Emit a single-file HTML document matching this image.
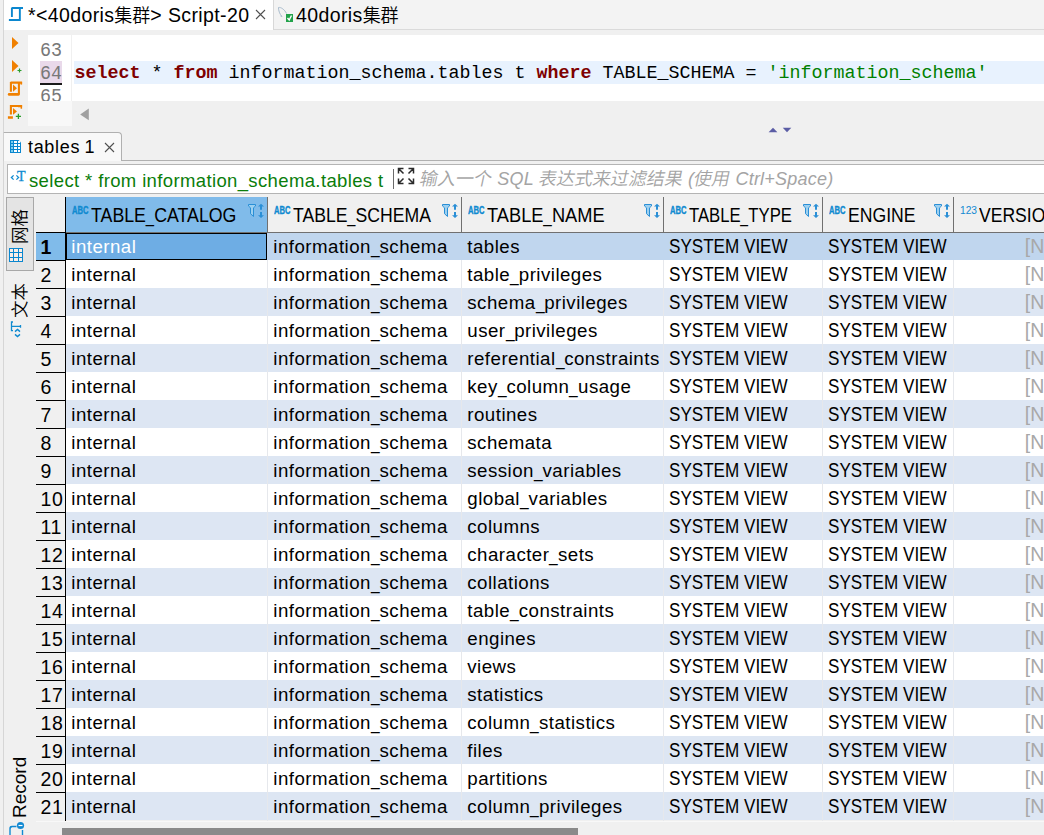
<!DOCTYPE html><html><head><meta charset="utf-8"><title>DBeaver</title><style>
*{box-sizing:border-box;margin:0;padding:0}
html,body{width:1044px;height:835px;overflow:hidden;background:#f0f0f0}
body{position:relative;font-family:"Liberation Sans","Noto Sans CJK SC",sans-serif;font-size:18px;color:#000}
.abs{position:absolute}
.t{position:absolute;white-space:pre;line-height:1}
.mono{font-family:"Liberation Mono","Noto Sans CJK SC",monospace}
.lc{font-size:18.7px;letter-spacing:.47px}
.us{display:inline-block;width:8.6px;transform:scaleX(.83);transform-origin:0 50%;letter-spacing:0}
.uc{font-size:19.5px;transform:scaleX(.876);transform-origin:0 50%}
.row{position:absolute;left:66px;width:978px;height:28px}
.odd{background:#fff}
.even{background:#dde6f3}
.cell{position:absolute;height:28px;line-height:28px;white-space:pre;font-size:18px;margin-top:-.5px}
.cell.lc{font-size:18.7px}
.cell.uc{font-size:19.5px;margin-top:-1.5px}
.rh{position:absolute;left:36px;width:30px;height:28px;line-height:28px;padding-left:4.500px;font-size:19.500px;letter-spacing:.6px;border-bottom:1px solid #000}
.null{color:#a8a8a8}
.vsep{position:absolute;width:1px;background:#e6e8ec}
.hdr{position:absolute;top:197px;height:36px;line-height:36px;white-space:pre}
.hdr.uc{transform:scaleX(.9)}
.hdr .us{width:9px}
</style></head><body>
<div class="abs" style="left:0;top:0;width:1044px;height:30px;background:#f3f3f3;border-bottom:1px solid #dadada"></div>
<div class="abs" style="left:0;top:0;width:4px;height:835px;background:#f0f0f0;border-right:1px solid #d6d6d6"></div>
<div class="abs" style="left:4px;top:0;width:270px;height:30px;background:#fff;border-right:1px solid #d8d8d8"></div>
<svg class="abs" style="left:8px;top:6px" width="16" height="16" viewBox="0 0 16 16"><path d="M4 2H15M3.900 1.600V11M11.850 2V14M0.900 14H12.800" fill="none" stroke="#0b87cf" stroke-width="1.900" stroke-linejoin="round"/></svg>
<span class="t" id="tab1" style="left:28px;top:6px;font-size:19.500px;letter-spacing:.38px">*&lt;40doris<span style="font-size:18px;letter-spacing:0;font-weight:350">集群</span>&gt; Script-20</span>
<svg class="abs" style="left:255px;top:9px" width="11" height="11" viewBox="0 0 11 11"><path d="M1 1L10 10M10 1L1 10" stroke="#505050" stroke-width="1.100" fill="none"/></svg>
<svg class="abs" style="left:276px;top:5px" width="19" height="19" viewBox="0 0 19 19"><path d="M2.500 2.500C5 2 8.500 4.500 10.500 8.500M2.500 2.500C2.500 5.500 3.500 9 6 11.500L4.500 11" fill="none" stroke="#a9bccd" stroke-width="1"/><rect x="10" y="9" width="7" height="8" fill="#22a24a"/><path d="M11.500 13l1.700 2L15.500 10.500" stroke="#fff" stroke-width="1.400" fill="none"/></svg>
<span class="t" id="tab2" style="left:296px;top:6px;font-size:19.500px;letter-spacing:.38px">40doris<span style="font-size:18px;letter-spacing:0;font-weight:350">集群</span></span>
<div class="abs" style="left:28px;top:35px;width:1016px;height:66px;background:#fff"></div>
<div class="abs" style="left:28px;top:101px;width:44px;height:25px;background:#f8f8f8"></div>
<div class="abs" style="left:71px;top:35px;width:1px;height:66px;background:#f0f0f0"></div>
<div class="abs" style="left:74px;top:61px;width:970px;height:23px;background:#e8f2fe"></div>
<div class="abs" style="left:40px;top:61px;width:22px;height:22px;background:#e9d9ea"></div>
<div class="abs" style="left:40px;top:83px;width:22px;height:2px;background:#1a1a1a"></div>
<span class="t mono" style="left:40px;top:40px;font-size:19.500px;line-height:22px;color:#787878;height:22px;overflow:hidden;transform:scaleX(.94);transform-origin:0 0">63</span>
<span class="t mono" style="left:40px;top:63px;font-size:19.500px;line-height:22px;color:#787878;height:22px;overflow:hidden;transform:scaleX(.94);transform-origin:0 0">64</span>
<span class="t mono" style="left:40px;top:86px;font-size:19.500px;line-height:22px;color:#787878;height:15px;overflow:hidden;transform:scaleX(.94);transform-origin:0 0">65</span>
<span class="t mono" style="left:74.500px;top:63px;font-size:18.330px;line-height:22px"><b style="color:#7f0000">select</b> * <b style="color:#7f0000">from</b> information_schema.tables t <b style="color:#7f0000">where</b> TABLE_SCHEMA = <span style="color:#008000">'information_schema'</span></span>
<svg class="abs" style="left:4px;top:35px" width="24" height="92" viewBox="0 0 24 92"><path d="M8 2L14.500 8L8 14z" fill="#f08000"/><path d="M8 25L14.500 31L8 37z" fill="#f08000"/><path d="M13.500 35.500h4M15.500 33.500v4" stroke="#2a9d2a" stroke-width="1.200"/><path d="M6.600 47.600H18.100M6.900 47v9.800M14.900 48v11.500" fill="none" stroke="#f08000" stroke-width="2.100"/><path d="M5.200 59.400H14.300" stroke="#f08000" stroke-width="2.800" stroke-linecap="round"/><path d="M16.500 47h1.600v2.600h-1.600z" fill="#f08000"/><path d="M9 49.600L13 53.200L9 56.800z" fill="#f08000"/><path d="M6.600 71H18.100M6.900 70v9.500" fill="none" stroke="#f08000" stroke-width="2.100"/><path d="M14 70h4.100v3.800h-1.500v-1.500H14z" fill="#f08000"/><path d="M9 72.900L13 76.400L9 79.800z" fill="#f08000"/><path d="M3.900 81.200h5v2.600h-5z" fill="#f08000"/><path d="M11.800 81.400h5.200M14.400 78.800v5.200" stroke="#2a9d2a" stroke-width="1.300"/></svg>
<svg class="abs" style="left:78px;top:107px" width="12" height="14" viewBox="0 0 12 14"><path d="M10.800 1.500L2.200 7.400L10.800 13.200z" fill="#a0a0a0"/></svg>
<svg class="abs" style="left:766px;top:125px" width="30" height="9" viewBox="0 0 30 9"><path d="M2.600 7.200L7 2.700L11.400 7.200z" fill="#5b5da5"/><path d="M16.800 2.800L21 7.200L25.300 2.800z" fill="#5b5da5"/></svg>
<div class="abs" style="left:4px;top:160px;width:1040px;height:1px;background:#b0b0b0"></div>
<div class="abs" style="left:3px;top:132px;width:119px;height:29px;background:#f8f8f8;border:1px solid #b0b0b0;border-bottom:none;border-left-color:#d0d0d0;border-radius:0 4px 0 0"></div>
<svg class="abs" style="left:10px;top:140px" width="11" height="13" viewBox="0 0 11 13"><path d="M0 0H8.500L11 2.500V13H0z" fill="#0b87cf"/><rect x="1" y="1" width="2" height="2" fill="#7fd0f0"/><rect x="4" y="1" width="3" height="2" fill="#fff"/><rect x="8" y="1" width="2" height="2" fill="#fff"/><rect x="1" y="4" width="2" height="2" fill="#7fd0f0"/><rect x="4" y="4" width="3" height="2" fill="#fff"/><rect x="8" y="4" width="2" height="2" fill="#fff"/><rect x="1" y="7" width="2" height="2" fill="#7fd0f0"/><rect x="4" y="7" width="3" height="2" fill="#fff"/><rect x="8" y="7" width="2" height="2" fill="#fff"/><rect x="1" y="10" width="2" height="2" fill="#7fd0f0"/><rect x="4" y="10" width="3" height="2" fill="#fff"/><rect x="8" y="10" width="2" height="2" fill="#fff"/></svg>
<span class="t" id="rtab" style="left:28px;top:138px;font-size:18px;letter-spacing:.68px;word-spacing:-1.200px">tables 1</span>
<svg class="abs" style="left:104px;top:142px" width="11" height="11" viewBox="0 0 11 11"><path d="M1 1L10 10M10 1L1 10" stroke="#505050" stroke-width="1.100" fill="none"/></svg>
<div class="abs" style="left:7px;top:164px;width:1040px;height:30px;background:#fff;border:1px solid #b4b4b4"></div>
<svg class="abs" style="left:10px;top:170px" width="18" height="14" viewBox="0 0 18 14"><text x="7" y="10.700" font-family="Liberation Serif,serif" font-size="14" fill="#0f8ad0" stroke="#0f8ad0" stroke-width=".3">T</text><path d="M3.600 5.400L1.400 7.500L3.600 9.600M6.400 5.400L8.600 7.500L6.400 9.600" stroke="#0f8ad0" stroke-width="1.300" fill="none"/></svg>
<span class="t" id="ftxt" style="left:29px;top:172px;font-size:18.500px;color:#0a7d0a;letter-spacing:.37px">select * from information_schema.tables t</span>
<div class="abs" style="left:393px;top:169px;width:1px;height:20px;background:#6a6a6a"></div>
<svg class="abs" style="left:397px;top:167px" width="18" height="18" viewBox="0 0 18 18"><path d="M1.500 6.500V1.500H6.500M2 2L6.500 6.500M11.500 1.500H16.500V6.500M16 2L11.500 6.500M1.500 11.500V16.500H6.500M2 16L6.500 11.500M16.500 11.500V16.500H11.500M16 16L11.500 11.500" stroke="#2a2a2a" stroke-width="1.500" fill="none"/></svg>
<span class="t" id="ph" style="left:420px;top:170px;font-size:18px;color:#a4a4a4;font-style:italic;letter-spacing:.22px"><span style="display:inline-block;font-style:normal;letter-spacing:0;font-weight:350;transform:skewX(-12deg)">输入一个</span> SQL <span style="display:inline-block;font-style:normal;letter-spacing:0;font-weight:350;transform:skewX(-12deg)">表达式来过滤结果</span> (<span style="display:inline-block;font-style:normal;letter-spacing:0;font-weight:350;transform:skewX(-12deg)">使用</span> Ctrl+Space)</span>
<div class="abs" style="left:6px;top:197px;width:28px;height:74px;background:#e4e4e4;border:1px solid #a8a8a8"></div>
<span class="t" style="left:11.500px;top:244px;font-size:17.500px;font-weight:350;transform:rotate(-90deg);transform-origin:0 0;width:40px;height:18px">网格</span>
<svg class="abs" style="left:9px;top:248px" width="14" height="14" viewBox="0 0 14 14" shape-rendering="crispEdges"><rect x="0" y="0" width="14" height="14" fill="#0b87cf"/><rect x="1" y="1" width="3" height="3" fill="#fdeee6"/><rect x="1" y="5" width="3" height="4" fill="#fdeee6"/><rect x="1" y="10" width="3" height="3" fill="#fdeee6"/><rect x="5" y="1" width="4" height="3" fill="#fdeee6"/><rect x="5" y="5" width="4" height="4" fill="#fdeee6"/><rect x="5" y="10" width="4" height="3" fill="#fdeee6"/><rect x="10" y="1" width="3" height="3" fill="#fdeee6"/><rect x="10" y="5" width="3" height="4" fill="#fdeee6"/><rect x="10" y="10" width="3" height="3" fill="#fdeee6"/></svg>
<span class="t" style="left:11.500px;top:318px;font-size:17.500px;font-weight:350;transform:rotate(-90deg);transform-origin:0 0;width:40px;height:18px">文本</span>
<svg class="abs" style="left:9px;top:321px" width="14" height="17" viewBox="0 0 14 17"><path d="M4 1H2.500V9.600H4M2.500 5.300H11.500M11.500 4V6.800" stroke="#0f8ad0" stroke-width="1.300" fill="none"/><path d="M6 10.600L8.500 8.400L11 10.600M6 13.400L8.500 15.600L11 13.400" stroke="#0f8ad0" stroke-width="1.400" fill="none"/></svg>
<span class="t" style="left:10px;top:818px;font-size:19px;transform:rotate(-90deg);transform-origin:0 0">Record</span>
<svg class="abs" style="left:8px;top:820px" width="18" height="15" viewBox="0 0 18 15"><path d="M2 15V8.500Q2 6.500 4 6.500H8.500M14.500 10V15" stroke="#1189d2" stroke-width="1.400" fill="none"/><path d="M2 6.500h2.500L2 9z" fill="#1189d2"/><circle cx="12.500" cy="5.500" r="3.600" fill="#1189d2"/><path d="M10.500 5.500h4" stroke="#fff" stroke-width="1.200"/></svg>
<div class="abs" style="left:66px;top:197px;width:202px;height:35px;background:#80bbea"></div>
<div class="abs" style="left:66px;top:232px;width:978px;height:1px;background:#707070"></div>
<svg class="abs" style="left:71.8px;top:205px" width="18" height="11" viewBox="0 0 18 11"><text x="0" y="9" font-family="Liberation Sans,sans-serif" font-size="10" font-weight="bold" fill="#0f8ad0" stroke="#0f8ad0" stroke-width=".35" textLength="16.500" lengthAdjust="spacingAndGlyphs">ABC</text></svg>
<span class="hdr uc" style="left:91px;transform:scaleX(0.911)">TABLE<span class="us">_</span>CATALOG</span>
<svg class="abs" style="left:247px;top:203px" width="18" height="16" viewBox="0 0 18 16"><path d="M1.500 1.500H8.500V3L6.500 4.800V13.500L3.500 10.700V4.800L1.500 3z" fill="#9dd0f0" stroke="#2a8fd6" stroke-width="1" stroke-linejoin="miter"/><path d="M11 3.600L14 0.800L17 3.600zM13 3.600h2v3.200h-2zM13 9.100h2v3.100h-2zM11 12.200L14 15L17 12.200z" fill="#2a8fd6"/></svg>
<svg class="abs" style="left:273.8px;top:205px" width="18" height="11" viewBox="0 0 18 11"><text x="0" y="9" font-family="Liberation Sans,sans-serif" font-size="10" font-weight="bold" fill="#0f8ad0" stroke="#0f8ad0" stroke-width=".35" textLength="16.500" lengthAdjust="spacingAndGlyphs">ABC</text></svg>
<span class="hdr uc" style="left:293px;transform:scaleX(0.903)">TABLE<span class="us">_</span>SCHEMA</span>
<svg class="abs" style="left:441px;top:203px" width="18" height="16" viewBox="0 0 18 16"><path d="M1.500 1.500H8.500V3L6.500 4.800V13.500L3.500 10.700V4.800L1.500 3z" fill="#9dd0f0" stroke="#2a8fd6" stroke-width="1" stroke-linejoin="miter"/><path d="M11 3.600L14 0.800L17 3.600zM13 3.600h2v3.200h-2zM13 9.100h2v3.100h-2zM11 12.200L14 15L17 12.200z" fill="#2a8fd6"/></svg>
<div class="abs" style="left:267px;top:197px;width:1px;height:36px;background:#707070"></div>
<svg class="abs" style="left:467.8px;top:205px" width="18" height="11" viewBox="0 0 18 11"><text x="0" y="9" font-family="Liberation Sans,sans-serif" font-size="10" font-weight="bold" fill="#0f8ad0" stroke="#0f8ad0" stroke-width=".35" textLength="16.500" lengthAdjust="spacingAndGlyphs">ABC</text></svg>
<span class="hdr uc" style="left:487px;transform:scaleX(0.936)">TABLE<span class="us">_</span>NAME</span>
<svg class="abs" style="left:643px;top:203px" width="18" height="16" viewBox="0 0 18 16"><path d="M1.500 1.500H8.500V3L6.500 4.800V13.500L3.500 10.700V4.800L1.500 3z" fill="#9dd0f0" stroke="#2a8fd6" stroke-width="1" stroke-linejoin="miter"/><path d="M11 3.600L14 0.800L17 3.600zM13 3.600h2v3.200h-2zM13 9.100h2v3.100h-2zM11 12.200L14 15L17 12.200z" fill="#2a8fd6"/></svg>
<div class="abs" style="left:461px;top:197px;width:1px;height:36px;background:#707070"></div>
<svg class="abs" style="left:669.8px;top:205px" width="18" height="11" viewBox="0 0 18 11"><text x="0" y="9" font-family="Liberation Sans,sans-serif" font-size="10" font-weight="bold" fill="#0f8ad0" stroke="#0f8ad0" stroke-width=".35" textLength="16.500" lengthAdjust="spacingAndGlyphs">ABC</text></svg>
<span class="hdr uc" style="left:689px;transform:scaleX(0.856)">TABLE<span class="us">_</span>TYPE</span>
<svg class="abs" style="left:802px;top:203px" width="18" height="16" viewBox="0 0 18 16"><path d="M1.500 1.500H8.500V3L6.500 4.800V13.500L3.500 10.700V4.800L1.500 3z" fill="#9dd0f0" stroke="#2a8fd6" stroke-width="1" stroke-linejoin="miter"/><path d="M11 3.600L14 0.800L17 3.600zM13 3.600h2v3.200h-2zM13 9.100h2v3.100h-2zM11 12.200L14 15L17 12.200z" fill="#2a8fd6"/></svg>
<div class="abs" style="left:663px;top:197px;width:1px;height:36px;background:#707070"></div>
<svg class="abs" style="left:828.8px;top:205px" width="18" height="11" viewBox="0 0 18 11"><text x="0" y="9" font-family="Liberation Sans,sans-serif" font-size="10" font-weight="bold" fill="#0f8ad0" stroke="#0f8ad0" stroke-width=".35" textLength="16.500" lengthAdjust="spacingAndGlyphs">ABC</text></svg>
<span class="hdr uc" style="left:848px;transform:scaleX(0.903)">ENGINE</span>
<svg class="abs" style="left:933px;top:203px" width="18" height="16" viewBox="0 0 18 16"><path d="M1.500 1.500H8.500V3L6.500 4.800V13.500L3.500 10.700V4.800L1.500 3z" fill="#9dd0f0" stroke="#2a8fd6" stroke-width="1" stroke-linejoin="miter"/><path d="M11 3.600L14 0.800L17 3.600zM13 3.600h2v3.200h-2zM13 9.100h2v3.100h-2zM11 12.200L14 15L17 12.200z" fill="#2a8fd6"/></svg>
<div class="abs" style="left:822px;top:197px;width:1px;height:36px;background:#707070"></div>
<svg class="abs" style="left:959.5px;top:205px" width="18" height="11" viewBox="0 0 18 11"><text x="0" y="9.300" font-family="Liberation Sans,sans-serif" font-size="11.500" fill="#1189d2" textLength="17" lengthAdjust="spacingAndGlyphs">123</text></svg>
<span class="hdr uc" style="left:979px;transform:scaleX(0.9)">VERSIO</span>
<div class="abs" style="left:953px;top:197px;width:1px;height:36px;background:#707070"></div>
<div class="row" style="top:233px;height:27px;background:#c0d6ee"></div>
<span class="cell lc" style="left:273.3px;top:233px">information<span class="us">_</span>schema</span>
<span class="cell lc" style="left:467.3px;top:233px">tables</span>
<span class="cell uc" style="left:669.2px;top:233px">SYSTEM VIEW</span>
<span class="cell uc" style="left:828.2px;top:233px">SYSTEM VIEW</span>
<span class="cell null" style="left:1024.800px;top:233px;font-size:19.500px;margin-top:-1.500px">[N</span>
<div class="rh" style="top:233px;background:#80bbea;font-weight:bold">1</div>
<div class="row odd" style="top:260px"></div>
<span class="cell lc" style="left:71.3px;top:261px">internal</span>
<span class="cell lc" style="left:273.3px;top:261px">information<span class="us">_</span>schema</span>
<span class="cell lc" style="left:467.3px;top:261px">table<span class="us">_</span>privileges</span>
<span class="cell uc" style="left:669.2px;top:261px">SYSTEM VIEW</span>
<span class="cell uc" style="left:828.2px;top:261px">SYSTEM VIEW</span>
<span class="cell null" style="left:1024.800px;top:261px;font-size:19.500px;margin-top:-1.500px">[N</span>
<div class="rh" style="top:261px;">2</div>
<div class="row even" style="top:288px"></div>
<span class="cell lc" style="left:71.3px;top:289px">internal</span>
<span class="cell lc" style="left:273.3px;top:289px">information<span class="us">_</span>schema</span>
<span class="cell lc" style="left:467.3px;top:289px">schema<span class="us">_</span>privileges</span>
<span class="cell uc" style="left:669.2px;top:289px">SYSTEM VIEW</span>
<span class="cell uc" style="left:828.2px;top:289px">SYSTEM VIEW</span>
<span class="cell null" style="left:1024.800px;top:289px;font-size:19.500px;margin-top:-1.500px">[N</span>
<div class="rh" style="top:289px;">3</div>
<div class="row odd" style="top:316px"></div>
<span class="cell lc" style="left:71.3px;top:317px">internal</span>
<span class="cell lc" style="left:273.3px;top:317px">information<span class="us">_</span>schema</span>
<span class="cell lc" style="left:467.3px;top:317px">user<span class="us">_</span>privileges</span>
<span class="cell uc" style="left:669.2px;top:317px">SYSTEM VIEW</span>
<span class="cell uc" style="left:828.2px;top:317px">SYSTEM VIEW</span>
<span class="cell null" style="left:1024.800px;top:317px;font-size:19.500px;margin-top:-1.500px">[N</span>
<div class="rh" style="top:317px;">4</div>
<div class="row even" style="top:344px"></div>
<span class="cell lc" style="left:71.3px;top:345px">internal</span>
<span class="cell lc" style="left:273.3px;top:345px">information<span class="us">_</span>schema</span>
<span class="cell lc" style="left:467.3px;top:345px">referential<span class="us">_</span>constraints</span>
<span class="cell uc" style="left:669.2px;top:345px">SYSTEM VIEW</span>
<span class="cell uc" style="left:828.2px;top:345px">SYSTEM VIEW</span>
<span class="cell null" style="left:1024.800px;top:345px;font-size:19.500px;margin-top:-1.500px">[N</span>
<div class="rh" style="top:345px;">5</div>
<div class="row odd" style="top:372px"></div>
<span class="cell lc" style="left:71.3px;top:373px">internal</span>
<span class="cell lc" style="left:273.3px;top:373px">information<span class="us">_</span>schema</span>
<span class="cell lc" style="left:467.3px;top:373px">key<span class="us">_</span>column<span class="us">_</span>usage</span>
<span class="cell uc" style="left:669.2px;top:373px">SYSTEM VIEW</span>
<span class="cell uc" style="left:828.2px;top:373px">SYSTEM VIEW</span>
<span class="cell null" style="left:1024.800px;top:373px;font-size:19.500px;margin-top:-1.500px">[N</span>
<div class="rh" style="top:373px;">6</div>
<div class="row even" style="top:400px"></div>
<span class="cell lc" style="left:71.3px;top:401px">internal</span>
<span class="cell lc" style="left:273.3px;top:401px">information<span class="us">_</span>schema</span>
<span class="cell lc" style="left:467.3px;top:401px">routines</span>
<span class="cell uc" style="left:669.2px;top:401px">SYSTEM VIEW</span>
<span class="cell uc" style="left:828.2px;top:401px">SYSTEM VIEW</span>
<span class="cell null" style="left:1024.800px;top:401px;font-size:19.500px;margin-top:-1.500px">[N</span>
<div class="rh" style="top:401px;">7</div>
<div class="row odd" style="top:428px"></div>
<span class="cell lc" style="left:71.3px;top:429px">internal</span>
<span class="cell lc" style="left:273.3px;top:429px">information<span class="us">_</span>schema</span>
<span class="cell lc" style="left:467.3px;top:429px">schemata</span>
<span class="cell uc" style="left:669.2px;top:429px">SYSTEM VIEW</span>
<span class="cell uc" style="left:828.2px;top:429px">SYSTEM VIEW</span>
<span class="cell null" style="left:1024.800px;top:429px;font-size:19.500px;margin-top:-1.500px">[N</span>
<div class="rh" style="top:429px;">8</div>
<div class="row even" style="top:456px"></div>
<span class="cell lc" style="left:71.3px;top:457px">internal</span>
<span class="cell lc" style="left:273.3px;top:457px">information<span class="us">_</span>schema</span>
<span class="cell lc" style="left:467.3px;top:457px">session<span class="us">_</span>variables</span>
<span class="cell uc" style="left:669.2px;top:457px">SYSTEM VIEW</span>
<span class="cell uc" style="left:828.2px;top:457px">SYSTEM VIEW</span>
<span class="cell null" style="left:1024.800px;top:457px;font-size:19.500px;margin-top:-1.500px">[N</span>
<div class="rh" style="top:457px;">9</div>
<div class="row odd" style="top:484px"></div>
<span class="cell lc" style="left:71.3px;top:485px">internal</span>
<span class="cell lc" style="left:273.3px;top:485px">information<span class="us">_</span>schema</span>
<span class="cell lc" style="left:467.3px;top:485px">global<span class="us">_</span>variables</span>
<span class="cell uc" style="left:669.2px;top:485px">SYSTEM VIEW</span>
<span class="cell uc" style="left:828.2px;top:485px">SYSTEM VIEW</span>
<span class="cell null" style="left:1024.800px;top:485px;font-size:19.500px;margin-top:-1.500px">[N</span>
<div class="rh" style="top:485px;">10</div>
<div class="row even" style="top:512px"></div>
<span class="cell lc" style="left:71.3px;top:513px">internal</span>
<span class="cell lc" style="left:273.3px;top:513px">information<span class="us">_</span>schema</span>
<span class="cell lc" style="left:467.3px;top:513px">columns</span>
<span class="cell uc" style="left:669.2px;top:513px">SYSTEM VIEW</span>
<span class="cell uc" style="left:828.2px;top:513px">SYSTEM VIEW</span>
<span class="cell null" style="left:1024.800px;top:513px;font-size:19.500px;margin-top:-1.500px">[N</span>
<div class="rh" style="top:513px;">11</div>
<div class="row odd" style="top:540px"></div>
<span class="cell lc" style="left:71.3px;top:541px">internal</span>
<span class="cell lc" style="left:273.3px;top:541px">information<span class="us">_</span>schema</span>
<span class="cell lc" style="left:467.3px;top:541px">character<span class="us">_</span>sets</span>
<span class="cell uc" style="left:669.2px;top:541px">SYSTEM VIEW</span>
<span class="cell uc" style="left:828.2px;top:541px">SYSTEM VIEW</span>
<span class="cell null" style="left:1024.800px;top:541px;font-size:19.500px;margin-top:-1.500px">[N</span>
<div class="rh" style="top:541px;">12</div>
<div class="row even" style="top:568px"></div>
<span class="cell lc" style="left:71.3px;top:569px">internal</span>
<span class="cell lc" style="left:273.3px;top:569px">information<span class="us">_</span>schema</span>
<span class="cell lc" style="left:467.3px;top:569px">collations</span>
<span class="cell uc" style="left:669.2px;top:569px">SYSTEM VIEW</span>
<span class="cell uc" style="left:828.2px;top:569px">SYSTEM VIEW</span>
<span class="cell null" style="left:1024.800px;top:569px;font-size:19.500px;margin-top:-1.500px">[N</span>
<div class="rh" style="top:569px;">13</div>
<div class="row odd" style="top:596px"></div>
<span class="cell lc" style="left:71.3px;top:597px">internal</span>
<span class="cell lc" style="left:273.3px;top:597px">information<span class="us">_</span>schema</span>
<span class="cell lc" style="left:467.3px;top:597px">table<span class="us">_</span>constraints</span>
<span class="cell uc" style="left:669.2px;top:597px">SYSTEM VIEW</span>
<span class="cell uc" style="left:828.2px;top:597px">SYSTEM VIEW</span>
<span class="cell null" style="left:1024.800px;top:597px;font-size:19.500px;margin-top:-1.500px">[N</span>
<div class="rh" style="top:597px;">14</div>
<div class="row even" style="top:624px"></div>
<span class="cell lc" style="left:71.3px;top:625px">internal</span>
<span class="cell lc" style="left:273.3px;top:625px">information<span class="us">_</span>schema</span>
<span class="cell lc" style="left:467.3px;top:625px">engines</span>
<span class="cell uc" style="left:669.2px;top:625px">SYSTEM VIEW</span>
<span class="cell uc" style="left:828.2px;top:625px">SYSTEM VIEW</span>
<span class="cell null" style="left:1024.800px;top:625px;font-size:19.500px;margin-top:-1.500px">[N</span>
<div class="rh" style="top:625px;">15</div>
<div class="row odd" style="top:652px"></div>
<span class="cell lc" style="left:71.3px;top:653px">internal</span>
<span class="cell lc" style="left:273.3px;top:653px">information<span class="us">_</span>schema</span>
<span class="cell lc" style="left:467.3px;top:653px">views</span>
<span class="cell uc" style="left:669.2px;top:653px">SYSTEM VIEW</span>
<span class="cell uc" style="left:828.2px;top:653px">SYSTEM VIEW</span>
<span class="cell null" style="left:1024.800px;top:653px;font-size:19.500px;margin-top:-1.500px">[N</span>
<div class="rh" style="top:653px;">16</div>
<div class="row even" style="top:680px"></div>
<span class="cell lc" style="left:71.3px;top:681px">internal</span>
<span class="cell lc" style="left:273.3px;top:681px">information<span class="us">_</span>schema</span>
<span class="cell lc" style="left:467.3px;top:681px">statistics</span>
<span class="cell uc" style="left:669.2px;top:681px">SYSTEM VIEW</span>
<span class="cell uc" style="left:828.2px;top:681px">SYSTEM VIEW</span>
<span class="cell null" style="left:1024.800px;top:681px;font-size:19.500px;margin-top:-1.500px">[N</span>
<div class="rh" style="top:681px;">17</div>
<div class="row odd" style="top:708px"></div>
<span class="cell lc" style="left:71.3px;top:709px">internal</span>
<span class="cell lc" style="left:273.3px;top:709px">information<span class="us">_</span>schema</span>
<span class="cell lc" style="left:467.3px;top:709px">column<span class="us">_</span>statistics</span>
<span class="cell uc" style="left:669.2px;top:709px">SYSTEM VIEW</span>
<span class="cell uc" style="left:828.2px;top:709px">SYSTEM VIEW</span>
<span class="cell null" style="left:1024.800px;top:709px;font-size:19.500px;margin-top:-1.500px">[N</span>
<div class="rh" style="top:709px;">18</div>
<div class="row even" style="top:736px"></div>
<span class="cell lc" style="left:71.3px;top:737px">internal</span>
<span class="cell lc" style="left:273.3px;top:737px">information<span class="us">_</span>schema</span>
<span class="cell lc" style="left:467.3px;top:737px">files</span>
<span class="cell uc" style="left:669.2px;top:737px">SYSTEM VIEW</span>
<span class="cell uc" style="left:828.2px;top:737px">SYSTEM VIEW</span>
<span class="cell null" style="left:1024.800px;top:737px;font-size:19.500px;margin-top:-1.500px">[N</span>
<div class="rh" style="top:737px;">19</div>
<div class="row odd" style="top:764px"></div>
<span class="cell lc" style="left:71.3px;top:765px">internal</span>
<span class="cell lc" style="left:273.3px;top:765px">information<span class="us">_</span>schema</span>
<span class="cell lc" style="left:467.3px;top:765px">partitions</span>
<span class="cell uc" style="left:669.2px;top:765px">SYSTEM VIEW</span>
<span class="cell uc" style="left:828.2px;top:765px">SYSTEM VIEW</span>
<span class="cell null" style="left:1024.800px;top:765px;font-size:19.500px;margin-top:-1.500px">[N</span>
<div class="rh" style="top:765px;">20</div>
<div class="row even" style="top:792px"></div>
<span class="cell lc" style="left:71.3px;top:793px">internal</span>
<span class="cell lc" style="left:273.3px;top:793px">information<span class="us">_</span>schema</span>
<span class="cell lc" style="left:467.3px;top:793px">column<span class="us">_</span>privileges</span>
<span class="cell uc" style="left:669.2px;top:793px">SYSTEM VIEW</span>
<span class="cell uc" style="left:828.2px;top:793px">SYSTEM VIEW</span>
<span class="cell null" style="left:1024.800px;top:793px;font-size:19.500px;margin-top:-1.500px">[N</span>
<div class="rh" style="top:793px;border-bottom:none">21</div>
<div class="abs" style="left:66px;top:233px;width:201px;height:27px;background:#6eade4;border:1px solid #000"></div>
<span class="cell lc" style="left:71.300px;top:233px;color:#fff">internal</span>
<div class="abs" style="left:36px;top:232px;width:30px;height:1px;background:#000"></div>
<div class="vsep" style="left:267px;top:260px;height:561px"></div>
<div class="vsep" style="left:461px;top:260px;height:561px"></div>
<div class="vsep" style="left:663px;top:260px;height:561px"></div>
<div class="vsep" style="left:822px;top:260px;height:561px"></div>
<div class="vsep" style="left:953px;top:260px;height:561px"></div>
<div class="abs" style="left:65px;top:197px;width:1px;height:624px;background:#000"></div>
<div class="abs" style="left:36px;top:821px;width:1008px;height:14px;background:#f0f0f0;border-top:1px solid #f8f8f8"></div>
<div class="abs" style="left:62px;top:828px;width:516px;height:7px;background:#8a8a8a"></div>
</body></html>
